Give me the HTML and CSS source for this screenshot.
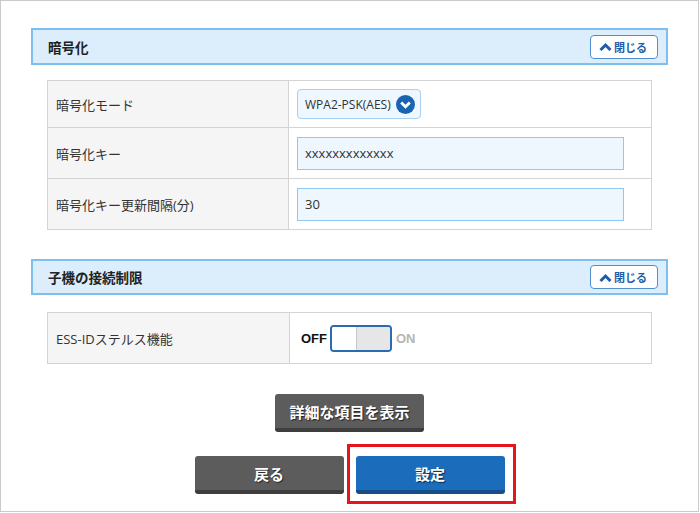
FILE: index.html
```html
<!DOCTYPE html>
<html lang="ja">

<head>
	<meta charset="UTF-8">
	<meta name="viewport" content="width=device-width, initial-scale=1.0">
	<title>無線設定</title>
	<link rel="stylesheet" href="styles.css">
</head>

<body>
	<div class="frame">
		<div class="section-head">
			<h2>暗号化</h2>
			<button class="close-btn">
				<svg width="13" height="9" viewBox="0 0 13 9"><polyline points="1.5,8 6.5,3 11.5,8" fill="none" stroke="#1d5ea8" stroke-width="3" /></svg>
				閉じる
			</button>
		</div>

		<table class="form-table">
			<tr class="row-select">
				<th>暗号化モード</th>
				<td>
					<div class="select">
						<span>WPA2-PSK(AES)</span>
						<svg width="19" height="19" viewBox="0 0 19 19"><circle cx="9.5" cy="9.5" r="9.5" fill="#1a63b0" /><polyline points="5.2,7.4 9.5,11.7 13.8,7.4" fill="none" stroke="#fff" stroke-width="2.8" /></svg>
					</div>
				</td>
			</tr>
			<tr>
				<th>暗号化キー</th>
				<td><input class="text-input" type="text" value="xxxxxxxxxxxxx"></td>
			</tr>
			<tr>
				<th>暗号化キー更新間隔(分)</th>
				<td><input class="text-input" type="text" value="30"></td>
			</tr>
		</table>

		<div class="section-head second">
			<h2>子機の接続制限</h2>
			<button class="close-btn">
				<svg width="13" height="9" viewBox="0 0 13 9"><polyline points="1.5,8 6.5,3 11.5,8" fill="none" stroke="#1d5ea8" stroke-width="3" /></svg>
				閉じる
			</button>
		</div>

		<table class="form-table compact">
			<tr>
				<th>ESS-IDステルス機能</th>
				<td>
					<div class="switch">
						<span class="switch-label off">OFF</span>
						<span class="switch-track"><span class="switch-knob"></span><span class="switch-rest"></span></span>
						<span class="switch-label on">ON</span>
					</div>
				</td>
			</tr>
		</table>

		<div class="actions">
			<button class="btn btn-dark btn-detail">詳細な項目を表示</button>
			<div class="action-row">
				<button class="btn btn-dark">戻る</button>
				<div class="highlight-wrap">
					<button class="btn btn-blue">設定</button>
					<span class="highlight"></span>
				</div>
			</div>
		</div>
	</div>
</body>

</html>
```

FILE: styles.css
```css
* {
	margin: 0;
	padding: 0;
	box-sizing: border-box;
}

body {
	font-family: 'Open Sans', 'Noto Sans CJK JP', sans-serif;
	background: white;
	color: #333;
}

.frame {
	width: 699px;
	height: 512px;
	border: 1px solid #cacaca;
	padding: 27px 30px 0 30px;
	overflow: hidden;
}

.section-head {
	height: 37px;
	background: #dcedfc;
	border: 2px solid #7fbff0;
	display: flex;
	align-items: center;
	justify-content: space-between;
	padding: 0 8px 0 15px;
}

.section-head.second {
	margin-top: 29px;
	height: 36px;
}

.section-head h2 {
	font-size: 13.5px;
	font-weight: bold;
	color: #222;
}

.close-btn {
	width: 68px;
	height: 24px;
	background: white;
	border: 1px solid #4d8fd0;
	border-radius: 4px;
	display: flex;
	align-items: center;
	justify-content: center;
	gap: 2px;
	font-family: inherit;
	font-size: 11px;
	font-weight: bold;
	color: #1d5ea8;
	padding-right: 2px;
}

.form-table {
	margin: 15px 16px 0 16px;
	width: 605px;
	border-collapse: collapse;
	font-size: 13px;
}

.form-table.compact {
	margin-top: 17px;
}

.form-table th,
.form-table td {
	border: 1px solid #d4d4d4;
	height: 51px;
	vertical-align: middle;
}

.form-table th {
	width: 242px;
	background: #f5f5f5;
	text-align: left;
	font-weight: normal;
	color: #333;
	padding-left: 8px;
}

.form-table td {
	padding: 0 27px 0 8px;
	background: white;
}

.form-table .row-select th,
.form-table .row-select td {
	height: 47px;
}

.select {
	display: inline-flex;
	align-items: center;
	gap: 5px;
	width: 124px;
	height: 30px;
	background: #eef6fe;
	border: 1px solid #a7d0f2;
	border-radius: 4px;
	padding: 0 4px 0 7px;
	font-size: 12px;
	color: #333;
}

.text-input {
	display: block;
	width: 327px;
	height: 33px;
	background: #eef6fe;
	border: 1px solid #91c7f1;
	padding: 0 7px;
	font-family: inherit;
	font-size: 13px;
	color: #333;
}

.switch {
	display: flex;
	align-items: center;
	gap: 3px;
	font-size: 13px;
	font-weight: bold;
	font-family: 'Liberation Sans', sans-serif;
}

.switch-label.off {
	color: #111;
	padding-left: 3px;
}

.switch-label.on {
	color: #b5b5b5;
	padding-left: 1px;
}

.switch-track {
	display: flex;
	width: 62px;
	height: 27px;
	border: 2px solid #2a6cb4;
	border-radius: 4px;
	overflow: hidden;
}

.switch-knob {
	width: 25px;
	background: white;
	border-right: 1px solid #c9c9c9;
}

.switch-rest {
	flex: 1;
	background: #e6e6e6;
}

.actions {
	margin-top: 30px;
	display: flex;
	flex-direction: column;
	align-items: center;
	gap: 24px;
}

.action-row {
	display: flex;
	gap: 12px;
}

.btn {
	width: 149px;
	height: 38px;
	border: none;
	border-radius: 3px;
	font-family: inherit;
	font-size: 15px;
	font-weight: bold;
	color: white;
	text-shadow: 1px 1px 1px rgba(0, 0, 0, 0.6);
}

.btn-dark {
	background: #5c5c5c;
	border-bottom: 4px solid #3e3e3e;
}

.btn-blue {
	background: #1c6cbc;
	border-bottom: 4px solid #154f89;
}

.highlight-wrap {
	position: relative;
}

.highlight {
	position: absolute;
	left: -9px;
	top: -12px;
	width: 169px;
	height: 60px;
	border: 3px solid #e8141b;
}
```
